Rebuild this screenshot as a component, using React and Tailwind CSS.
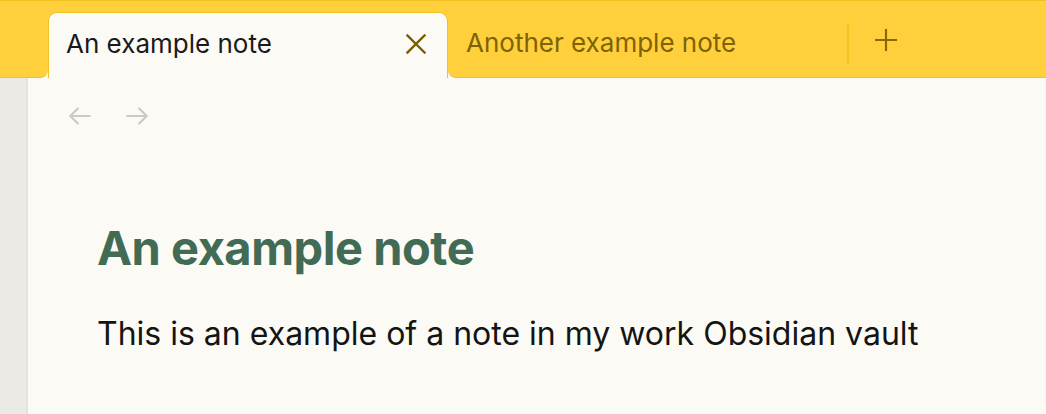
import React from "react";

const Y = "bg-[#ffd03c]";
const B = "border-[#f3c021]";

function XIcon() {
  return (
    <svg width="20" height="20" viewBox="0 0 20 20" fill="none" stroke="#7a5c00" strokeWidth="2.4" strokeLinecap="square">
      <path d="M1.5 1.5 L18.5 18.5 M18.5 1.5 L1.5 18.5" />
    </svg>
  );
}

function Plus() {
  return (
    <svg width="24" height="24" viewBox="0 0 24 24" fill="none" stroke="#8a6a00" strokeWidth="2.2">
      <path d="M12 1 V23 M1 12 H23" />
    </svg>
  );
}

function Arrow({ dir }) {
  return (
    <svg width="26" height="26" viewBox="0 0 24 24" fill="none" stroke="#cccac5" strokeWidth="2" strokeLinecap="round" strokeLinejoin="round">
      {dir === "left" ? <path d="M21 12H3M10 5l-7 7 7 7" /> : <path d="M3 12h18M14 5l7 7-7 7" />}
    </svg>
  );
}

export default function App() {
  return (
    <div className="w-[1046px] h-[414px] overflow-hidden flex flex-col bg-[#fbfaf5]" style={{ fontFamily: "Inter, 'Noto Sans', sans-serif" }}>
      <div className={`h-[12px] shrink-0 ${Y} border-t ${B}`} />
      <div className="h-[66px] shrink-0 flex bg-[#fbfaf5]">
        <div className={`w-[48px] ${Y} border-b ${B} rounded-br-[8px]`} />
        <div className={`w-[400px] ${Y}`}>
          <div className={`h-full bg-[#fbfaf5] rounded-t-[9px] border-t border-l border-r ${B} flex items-center pl-[17px] pr-[21px] pb-[4px]`}>
            <span className="text-[26px] leading-[1.2] text-[#1a1a1a] flex-1">An example note</span>
            <XIcon />
          </div>
        </div>
        <div className={`flex-1 ${Y} border-b ${B} rounded-bl-[8px] flex items-center pb-[4px]`}>
          <span className="text-[26px] leading-[1.2] text-[#7d6303] pl-[18px] w-[399px]">Another example note</span>
          <div className="w-[2px] h-[40px] bg-[#f5c21c] mt-[2px]" />
          <div className="ml-[25px] mb-[6px]"><Plus /></div>
        </div>
      </div>
      <div className="flex-1 flex">
        <div className="w-[28px] bg-[#ebeae4] border-r-2 border-[#e4e3dd]" />
        <div className="flex-1 flex flex-col">
          <div className="flex items-center gap-[31px] pl-[39px] pt-[25px]">
            <Arrow dir="left" />
            <Arrow dir="right" />
          </div>
          <div className="pl-[69px] pt-[95px]">
            <h1 className="text-[47px] font-bold text-[#426b55] leading-none tracking-[-0.01em]">An example note</h1>
            <p className="mt-[39px] text-[32px] text-[#141414] leading-[1.5]">This is an example of a note in my work Obsidian vault</p>
          </div>
        </div>
      </div>
    </div>
  );
}
